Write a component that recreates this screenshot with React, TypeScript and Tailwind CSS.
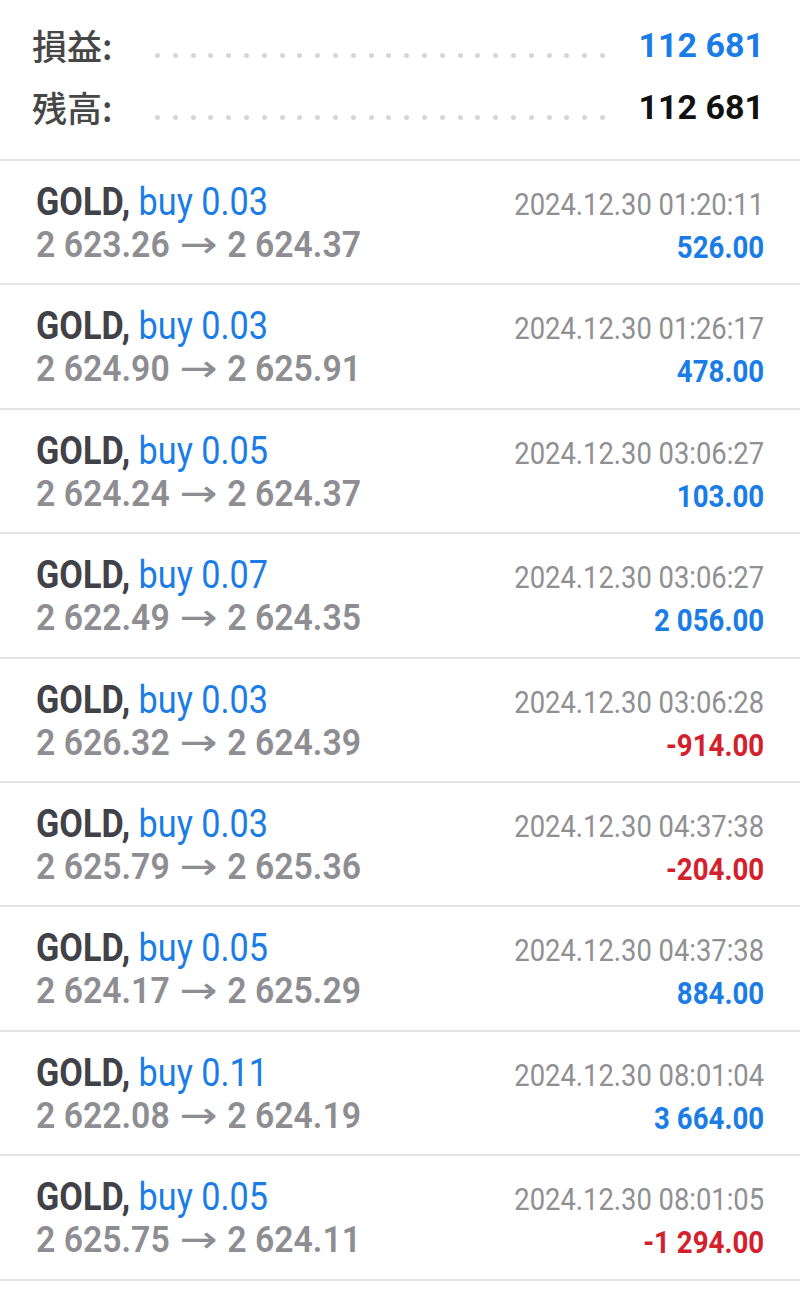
import React from 'react';

type Trade = {
  lot: string;
  from: string;
  to: string;
  time: string;
  profit: string;
};

const trades: Trade[] = [
  { lot: '0.03', from: '2 623.26', to: '2 624.37', time: '01:20:11', profit: '526.00' },
  { lot: '0.03', from: '2 624.90', to: '2 625.91', time: '01:26:17', profit: '478.00' },
  { lot: '0.05', from: '2 624.24', to: '2 624.37', time: '03:06:27', profit: '103.00' },
  { lot: '0.07', from: '2 622.49', to: '2 624.35', time: '03:06:27', profit: '2 056.00' },
  { lot: '0.03', from: '2 626.32', to: '2 624.39', time: '03:06:28', profit: '-914.00' },
  { lot: '0.03', from: '2 625.79', to: '2 625.36', time: '04:37:38', profit: '-204.00' },
  { lot: '0.05', from: '2 624.17', to: '2 625.29', time: '04:37:38', profit: '884.00' },
  { lot: '0.11', from: '2 622.08', to: '2 624.19', time: '08:01:04', profit: '3 664.00' },
  { lot: '0.05', from: '2 625.75', to: '2 624.11', time: '08:01:05', profit: '-1 294.00' },
  { lot: '0.05', from: '2 624.80', to: '2 625.02', time: '08:01:05', profit: '110.00' },
];

const Dots: React.FC = () => (
  <div className="w-[450px] flex justify-between mt-[20px]">
    {Array.from({ length: 26 }).map((_, i) => (
      <span key={i} className="block w-[5px] h-[5px] rounded-full bg-[#d6d6d6]" />
    ))}
  </div>
);

const SummaryLine: React.FC<{ label: string; value: string; valueClass: string }> = ({ label, value, valueClass }) => (
  <div className="flex items-center h-[62px]">
    <div className="w-[123px] font-['Noto_Sans_CJK_JP',sans-serif] text-[35px] font-medium text-[#474747] whitespace-nowrap">
      {label}
    </div>
    <Dots />
    <div className={`flex-1 text-right text-[34px] font-bold whitespace-nowrap ${valueClass}`}>{value}</div>
  </div>
);

const TradeRow: React.FC<{ trade: Trade }> = ({ trade }) => {
  const loss = trade.profit.startsWith('-');
  return (
    <div className="h-[124.4px] shrink-0 border-b-2 border-[#e3e3e3] flex justify-between px-[36px]">
      <div className="pt-[20px]">
        <div className="text-[38px] leading-[42px] whitespace-nowrap origin-left scale-x-[0.9]">
          <span className="font-bold text-[#414148]">GOLD,</span>{' '}
          <span className="text-[#1a7de6]">buy {trade.lot}</span>
        </div>
        <div className="text-[37.5px] leading-[42px] font-semibold text-[#8e8e92] whitespace-nowrap origin-left scale-x-[0.9]">
          <span>{trade.from}</span>
          <span className="inline-block w-[64px] text-center font-normal font-['DejaVu_Sans',sans-serif]">
            <span className="inline-block scale-x-[1.35]">→</span>
          </span>
          <span>{trade.to}</span>
        </div>
      </div>
      <div className="pt-[25px] text-right">
        <div className="text-[32px] leading-[36px] text-[#909092] whitespace-nowrap origin-right scale-x-[0.855]">
          2024.12.30 {trade.time}
        </div>
        <div
          className={`mt-[8px] text-[31.4px] leading-[36px] font-bold whitespace-nowrap origin-right scale-x-[0.88] ${
            loss ? 'text-[#d2202c]' : 'text-[#1a7de6]'
          }`}
        >
          {trade.profit}
        </div>
      </div>
    </div>
  );
};

export default function App() {
  return (
    <div className="w-[800px] h-[1305px] overflow-hidden bg-white font-[Roboto,sans-serif] flex flex-col">
      <div className="h-[161px] shrink-0 border-b-2 border-[#e3e3e3] pt-[14px] pl-[32px] pr-[36px]">
        <SummaryLine label="損益:" value="112 681" valueClass="text-[#1a7de6]" />
        <SummaryLine label="残高:" value="112 681" valueClass="text-[#111111]" />
      </div>
      {trades.map((t, i) => (
        <TradeRow key={i} trade={t} />
      ))}
    </div>
  );
}
